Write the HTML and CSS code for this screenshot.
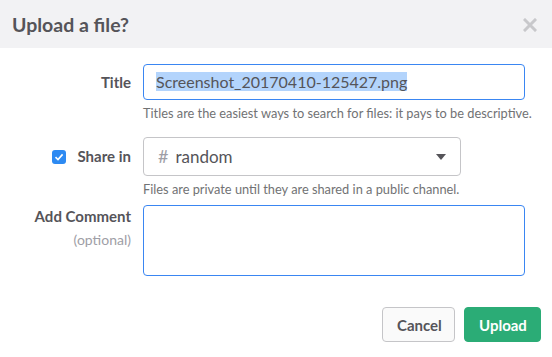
FILE: index.html
```html
<!DOCTYPE html>
<html lang="en">
<head>
    <meta charset="UTF-8">
    <meta name="viewport" content="width=device-width, initial-scale=1.0">
    <title>Upload a file?</title>
    <link rel="stylesheet" href="styles.css">
</head>
<body>
    <div class="modal">
        <div class="modal-header">
            <h1>Upload a file?</h1>
            <span class="close">
                <svg width="14" height="14" viewBox="0 0 14 14"><path d="M2 2 L12 12 M12 2 L2 12" stroke="#c8c8cb" stroke-width="3" stroke-linecap="square"/></svg>
            </span>
        </div>
        <div class="modal-body">
            <div class="row">
                <label class="label">Title</label>
                <div class="field">
                    <div class="input focus"><span class="selected">Screenshot_20170410-125427.png</span></div>
                    <p class="hint">Titles are the easiest ways to search for files: it pays to be descriptive.</p>
                </div>
            </div>
            <div class="row row-share">
                <label class="label share-label">
                    <span class="checkbox">
                        <svg width="10" height="10" viewBox="0 0 10 10"><path d="M1.5 5.2 L4 7.6 L8.6 2.4" fill="none" stroke="#fff" stroke-width="1.6"/></svg>
                    </span>
                    Share in
                </label>
                <div class="field">
                    <div class="select"><span class="hash">#</span>random<span class="caret"></span></div>
                    <p class="hint">Files are private until they are shared in a public channel.</p>
                </div>
            </div>
            <div class="row row-comment">
                <label class="label comment-label">Add Comment<span class="optional">(optional)</span></label>
                <div class="field">
                    <div class="textarea"></div>
                </div>
            </div>
        </div>
        <div class="modal-footer">
            <button class="btn btn-cancel">Cancel</button>
            <button class="btn btn-upload">Upload</button>
        </div>
    </div>
</body>
</html>
```

FILE: styles.css
```css
*{
    margin: 0;
    padding: 0;
    box-sizing: border-box;
}
html,body{
    width: 100%;
    height: 100%;
    background: #fff;
}
body{
    font-family: Lato, "Liberation Sans", sans-serif;
    color: #555459;
    overflow: hidden;
}

.modal-header{
    height: 48px;
    background: #f2f2f4;
    display: flex;
    align-items: center;
    justify-content: space-between;
    padding: 0 15px 0 12px;
}
.modal-header h1{
    font-size: 19.5px;
    font-weight: 700;
    color: #555459;
}
.close{
    display: flex;
    margin-top: 2px;
}

.modal-body{
    padding: 16px 27px 0 0;
}
.row{
    display: grid;
    grid-template-columns: 131px 1fr;
    column-gap: 12px;
    align-items: start;
}
.label{
    font-size: 15px;
    font-weight: 700;
    text-align: right;
    line-height: 36px;
}
.field{
    min-width: 0;
}
.input{
    height: 36px;
    border: 1px solid #3a86f2;
    border-radius: 4px;
    padding: 0 12px;
    font-size: 16px;
    line-height: 34px;
    color: #555459;
}
.selected{
    background: #b3d4fc;
}
.hint{
    font-size: 12.8px;
    color: #717274;
    line-height: 16px;
    margin-top: 5px;
    white-space: nowrap;
}

.row-share{
    margin-top: 16px;
}
.share-label{
    display: flex;
    justify-content: flex-end;
    align-items: center;
    height: 39px;
    line-height: 39px;
}
.checkbox{
    width: 14px;
    height: 14px;
    border-radius: 3px;
    background: #2d8af2;
    display: flex;
    align-items: center;
    justify-content: center;
    margin-right: 12px;
}
.select{
    width: 318px;
    height: 39px;
    border: 1px solid #c5c5c8;
    border-radius: 4px;
    padding: 0 14px;
    font-size: 17px;
    line-height: 37px;
    display: flex;
    align-items: center;
}
.hash{
    color: #9e9ea6;
    margin-right: 7px;
    font-size: 18px;
}
.caret{
    margin-left: auto;
    width: 0;
    height: 0;
    border-left: 5px solid transparent;
    border-right: 5px solid transparent;
    border-top: 6px solid #555459;
}

.row-comment{
    margin-top: 8px;
}
.comment-label{
    line-height: 22px;
    display: flex;
    flex-direction: column;
    align-items: flex-end;
}
.optional{
    font-weight: 400;
    font-size: 14px;
    color: #9e9ea6;
    margin-top: 2px;
}
.textarea{
    height: 71px;
    border: 1px solid #3a86f2;
    border-radius: 4px;
}

.modal-footer{
    display: flex;
    justify-content: flex-end;
    gap: 9px;
    padding: 31px 11px 0 0;
}
.btn{
    height: 35px;
    border-radius: 4px;
    font-family: Lato, "Liberation Sans", sans-serif;
    font-size: 15px;
    font-weight: 700;
    padding: 0 14px;
}
.btn-cancel{
    width: 73px;
    background: #fafafa;
    border: 1px solid #c5c5c8;
    color: #555459;
}
.btn-upload{
    width: 77px;
    background: #2bac76;
    border: 1px solid #2bac76;
    color: #fff;
}
```
